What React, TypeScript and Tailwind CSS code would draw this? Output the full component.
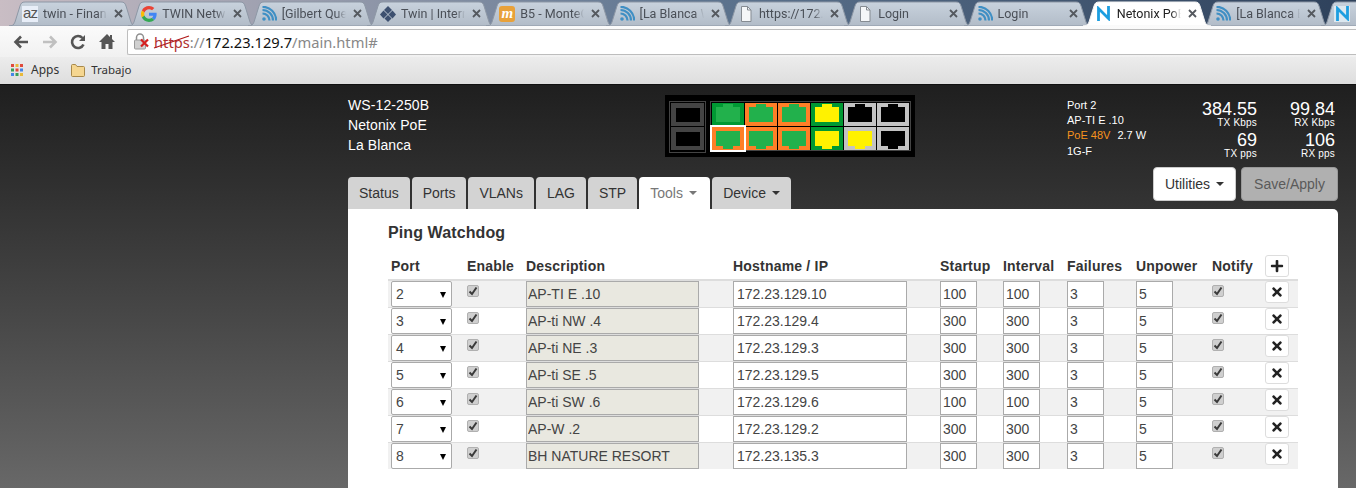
import { FaPlus, FaTimes } from 'react-icons/fa';

const tabs = [
  { title: 'twin - Financ', icon: 'az' },
  { title: 'TWIN Netwo', icon: 'google' },
  { title: '[Gilbert Que', icon: 'rss' },
  { title: 'Twin | Intern', icon: 'twin' },
  { title: 'B5 - MonteC', icon: 'm' },
  { title: '[La Blanca W', icon: 'rss' },
  { title: 'https://172.2', icon: 'file' },
  { title: 'Login', icon: 'file' },
  { title: 'Login', icon: 'rss' },
  { title: 'Netonix PoE', icon: 'n', active: true },
  { title: '[La Blanca E', icon: 'rss' },
  { title: '', icon: 'nbox' },
];

const rows = [
  { port: 2, desc: 'AP-TI E .10', host: '172.23.129.10', startup: 100, interval: 100 },
  { port: 3, desc: 'AP-ti NW .4', host: '172.23.129.4', startup: 300, interval: 300 },
  { port: 4, desc: 'AP-ti NE .3', host: '172.23.129.3', startup: 300, interval: 300 },
  { port: 5, desc: 'AP-ti SE .5', host: '172.23.129.5', startup: 300, interval: 300 },
  { port: 6, desc: 'AP-ti SW .6', host: '172.23.129.6', startup: 100, interval: 100 },
  { port: 7, desc: 'AP-W .2', host: '172.23.129.2', startup: 300, interval: 300 },
  { port: 8, desc: 'BH NATURE RESORT', host: '172.23.135.3', startup: 300, interval: 300 },
];

function Favicon({ icon }: { icon: string }) {
  if (icon === 'az') {
    return (
      <span className="w-4 h-4 bg-[#e8eef8] text-[#555] text-[15px] leading-[14px] tracking-[-1px] text-center shrink-0 font-['Liberation_Sans',sans-serif]">az</span>
    );
  }
  if (icon === 'google') {
    return (
      <svg width="16" height="16" viewBox="0 0 48 48" className="shrink-0">
        <path fill="#EA4335" d="M24 9.5c3.5 0 6.700 1.300 9.100 3.500l6.800-6.800C35.800 2.400 30.300 0 24 0 14.600 0 6.500 5.400 2.600 13.200l7.900 6.100C12.400 13.700 17.700 9.500 24 9.500z" />
        <path fill="#4285F4" d="M46.900 24.500c0-1.600-.1-3.100-.4-4.500H24v9h12.900c-.6 3-2.200 5.500-4.800 7.200l7.700 6c4.500-4.200 7.100-10.300 7.100-17.700z" />
        <path fill="#FBBC05" d="M10.500 28.700A14.500 14.500 0 0 1 10.500 19.300l-7.900-6.100A24 24 0 0 0 2.600 34.800z" />
        <path fill="#34A853" d="M24 48c6.500 0 11.900-2.100 15.900-5.800l-7.700-6c-2.100 1.400-4.900 2.300-8.200 2.300-6.300 0-11.600-4.200-13.500-9.800l-7.900 6.100C6.500 42.600 14.600 48 24 48z" />
      </svg>
    );
  }
  if (icon === 'rss') {
    return (
      <svg width="16" height="16" viewBox="0 0 16 16" className="shrink-0" fill="none" stroke="#3f8fc4" strokeWidth="2.200">
        <circle cx="3" cy="13" r="1.800" fill="#3f8fc4" stroke="none" />
        <path d="M1.500 7.500a7 7 0 0 1 7 7" />
        <path d="M1.500 4a10.500 10.500 0 0 1 10.500 10.500" />
        <path d="M1.500 .8a13.700 13.700 0 0 1 13.700 13.700" />
      </svg>
    );
  }
  if (icon === 'twin') {
    return (
      <svg width="16" height="16" viewBox="0 0 16 16" className="shrink-0" fill="#3d5070">
        <path d="M8 0l4 4-4 4-4-4z" />
        <path d="M3.500 4.500l4 4-4 4-3.500-4z" />
        <path d="M12.500 4.500l3.500 4-3.500 4-4-4z" />
        <path d="M8 9l3.500 3.500L8 16l-3.500-3.500z" />
      </svg>
    );
  }
  if (icon === 'm') {
    return (
      <span className="w-4 h-4 rounded-[3px] bg-[#e8a13a] text-white text-[15px] leading-[15px] italic font-bold text-center shrink-0 font-['Liberation_Serif',serif]">m</span>
    );
  }
  if (icon === 'file') {
    return (
      <svg width="16" height="16" viewBox="0 0 16 16" className="shrink-0" fill="#f4f6f8" stroke="#858b92">
        <path d="M3.500 .5h6l3.500 3.500v11.500h-9.500z" />
        <path d="M9.500 .5v3.500h3.500" fill="none" />
      </svg>
    );
  }
  if (icon === 'n' || icon === 'nbox') {
    return (
      <span className={`w-4 h-4 flex justify-center items-center shrink-0 ${icon === 'nbox' ? 'bg-[#dce8f0]' : ''}`}>
        <svg width="13" height="15" viewBox="0 0 13 15" fill="none" stroke="#1c9ee0" strokeWidth="2.800">
          <path d="M1.500 15V2.500l10 10V0" />
        </svg>
      </span>
    );
  }
  return null;
}

function ChromeTab({ title, icon, active }: { title: string; icon: string; active?: boolean }) {
  return (
    <div className={`relative w-[128px] h-[25px] -mr-[8.7px] shrink-0 flex items-center pl-[13px] pr-[14px] ${active ? 'z-10' : ''}`}>
      <svg width="128" height="25" viewBox="0 0 128 25" className="absolute inset-0">
        <defs>
          <linearGradient id="tabFill" x1="0" y1="0" x2="0" y2="1">
            <stop offset="0" stopColor="#c8d2dd" />
            <stop offset="1" stopColor="#b2bcc8" />
          </linearGradient>
        </defs>
        <path
          d="M0 25c3 0 5-1 6-4L11 5c1-3 2-4 5-4h96c3 0 4 1 5 4l5 16c1 3 3 4 6 4z"
          fill={active ? '#ffffff' : 'url(#tabFill)'}
          stroke={active ? '#f4f4f4' : '#8d97a5'}
          strokeWidth="1"
        />
      </svg>
      <div className="relative flex items-center w-full">
        <Favicon icon={icon} />
        <span
          className={`ml-[5px] w-[64px] overflow-hidden whitespace-nowrap text-[12.500px] leading-4 [mask-image:linear-gradient(to_right,black_85%,transparent)] ${active ? 'text-[#222]' : 'text-[#4a4f57]'}`}
        >
          {title}
        </span>
        {icon !== 'nbox' && (
          <svg width="9" height="9" viewBox="0 0 9 9" className="ml-auto" stroke="#55595f" strokeWidth="1.800">
            <path d="M1 1l7 7M8 1l-7 7" />
          </svg>
        )}
      </div>
    </div>
  );
}

function Toolbar() {
  return (
    <div className="h-[31px] bg-gradient-to-b from-[#fbfbfb] to-[#f1f1f1] flex items-center relative z-20">
      <div className="w-[127px] flex items-center shrink-0">
        <svg width="16" height="14" viewBox="0 0 16 14" className="ml-[13px]" fill="none" stroke="#555" strokeWidth="2.600">
          <path d="M15 7H3M8 1.500L2.500 7 8 12.500" />
        </svg>
        <svg width="16" height="14" viewBox="0 0 16 14" className="ml-[13px]" fill="none" stroke="#c0c0c0" strokeWidth="2.600">
          <path d="M1 7h12M8 1.500L13.500 7 8 12.500" />
        </svg>
        <svg width="16" height="16" viewBox="0 0 16 16" className="ml-[12px]" fill="none" stroke="#555" strokeWidth="2.600">
          <path d="M13.500 10.500A6 6 0 1 1 12.500 4" />
          <path d="M15 1v6H9z" fill="#555" stroke="none" />
        </svg>
        <svg width="16" height="15" viewBox="0 0 16 15" className="ml-[13px]" fill="#555">
          <path d="M8 0L0 8h2.500v7h4v-5h3v5h4V8H16l-3-3V1h-2v2z" />
        </svg>
      </div>
      <div className="flex-1 h-[26px] bg-white border border-[#bdbdbd] border-r-0 rounded-l-[2px] flex items-center text-[14.700px] font-['Noto_Sans',sans-serif] relative">
        <svg width="20" height="18" viewBox="0 0 20 18" className="ml-[5px] shrink-0">
          <path d="M3.500 7V4.500a3.500 3.500 0 0 1 7 0V7" fill="none" stroke="#8f8f8f" strokeWidth="1.500" />
          <rect x="1.500" y="7" width="11" height="9" rx="1" fill="#d0d0d0" stroke="#9a9a9a" />
          <path d="M8 6.500l7 7M15 6.500l-7 7" stroke="#d42020" strokeWidth="2.200" />
        </svg>
        <span className="relative ml-px text-[#b03030] leading-5">
          https
          <svg width="38" height="14" viewBox="0 0 38 14" className="absolute -left-px top-[3px]" stroke="#b01818" strokeWidth="1.300">
            <path d="M1 13L36 1" />
          </svg>
        </span>
        <span className="text-[#888] leading-5">://</span>
        <span className="text-[#111] leading-5">172.23.129.7</span>
        <span className="text-[#888] leading-5">/main.html#</span>
      </div>
    </div>
  );
}

function BookmarksBar() {
  return (
    <div className="h-[27px] bg-gradient-to-b from-[#ececec] to-[#dedede] flex items-center text-[12px] text-[#333] font-['Noto_Sans',sans-serif] pl-[10px] pb-[1px]">
      <svg width="14" height="14" viewBox="0 0 14 14">
        <rect x="1" y="1" width="3" height="3" fill="#e04a3c" />
        <rect x="5.500" y="1" width="3" height="3" fill="#e8b93a" />
        <rect x="10" y="1" width="3" height="3" fill="#e04a3c" />
        <rect x="1" y="5.500" width="3" height="3" fill="#3a9e58" />
        <rect x="5.500" y="5.500" width="3" height="3" fill="#e04a3c" />
        <rect x="10" y="5.500" width="3" height="3" fill="#4585e8" />
        <rect x="1" y="10" width="3" height="3" fill="#4585e8" />
        <rect x="5.500" y="10" width="3" height="3" fill="#3a9e58" />
        <rect x="10" y="10" width="3" height="3" fill="#e8b93a" />
      </svg>
      <span className="ml-[7px]">Apps</span>
      <svg width="16" height="14" viewBox="0 0 16 14" className="ml-[11px]" fill="#f5d690" stroke="#a8894a">
        <path d="M1.500 12.500v-10c0-.6.400-1 1-1h3l1.500 2h6.500c.6 0 1 .4 1 1v8c0 .6-.4 1-1 1h-11c-.6 0-1-.4-1-1z" />
      </svg>
      <span className="ml-[5px] text-[11.500px]">Trabajo</span>
    </div>
  );
}

// top row jack notch points up, bottom row points down
function SwitchPorts() {
  const cols = [0, 1, 2, 3, 4, 5];
  const top = [
    ['#009933', '#22b14c'],
    ['#ff7f27', '#22b14c'],
    ['#ff7f27', '#22b14c'],
    ['#009933', '#fff200'],
    ['#c3c3c3', '#000000'],
    ['#c3c3c3', '#000000'],
  ];
  const bottom = [
    ['#ff7f27', '#22b14c'],
    ['#ff7f27', '#22b14c'],
    ['#ff7f27', '#22b14c'],
    ['#009933', '#fff200'],
    ['#c3c3c3', '#fff200'],
    ['#c3c3c3', '#000000'],
  ];
  return (
    <svg width="250" height="62" viewBox="0 0 250 62" className="shrink-0 block">
      <rect width="250" height="62" fill="#000" />
      <rect x="4.500" y="6.500" width="36" height="51" fill="none" stroke="#444" />
      <rect x="6" y="8" width="33" height="23" fill="#444" />
      <rect x="11" y="13" width="24" height="14" fill="#000" />
      <rect x="6" y="32" width="33" height="23" fill="#444" />
      <rect x="11" y="37" width="24" height="14" fill="#000" />
      <rect x="45.500" y="6.500" width="200" height="49" fill="none" stroke="#444" />
      {cols.map((i) => {
        const x = 47 + i * 33;
        return (
          <g key={i}>
            <rect x={x} y="8" width="32" height="23" fill={top[i][0]} />
            <rect x={x + 4} y="12" width="24" height="15" fill={top[i][1]} />
            <rect x={x + 11} y="9" width="10" height="3" fill={top[i][1]} />
            <rect x={x} y="32" width="32" height="23" fill={bottom[i][0]} />
            <rect x={x + 4} y="36" width="24" height="15" fill={bottom[i][1]} />
            <rect x={x + 11} y="51" width="10" height="3" fill={bottom[i][1]} />
          </g>
        );
      })}
      <rect x="46" y="31" width="34" height="25" fill="none" stroke="#fff" strokeWidth="2" />
    </svg>
  );
}

function Stat({ value, label }: { value: string; label: string }) {
  return (
    <div className="text-right text-white">
      <div className="text-[18px] leading-[17px]">{value}</div>
      <div className="text-[10px] leading-[10px] tracking-[0.2px]">{label}</div>
    </div>
  );
}

function Caret() {
  return <span className="inline-block ml-[6px] align-middle w-0 h-0 border-x-4 border-x-transparent border-t-4 border-t-current" />;
}

function Check() {
  return (
    <span className="block w-3 h-3 rounded-[2px] bg-[#cfcfcf] border border-[#b0b0b0]">
      <svg width="10" height="10" viewBox="0 0 10 10" fill="none" stroke="#3a3a3a" strokeWidth="2">
        <path d="M1.500 5.500L4 8l4.500-6.500" />
      </svg>
    </span>
  );
}

function NumInput({ value, className }: { value: string | number; className: string }) {
  return (
    <input
      readOnly
      value={value}
      className={`block h-[26px] border border-[#aaa] bg-white px-[3px] text-[14px] text-[#444] outline-none ${className}`}
    />
  );
}

function IconButton({ children }: { children: React.ReactNode }) {
  return (
    <button className="flex items-center justify-center w-[24px] h-[22px] bg-white border border-[#ddd] rounded-[3px] text-[#222] text-[14px]">
      {children}
    </button>
  );
}

function PingTable() {
  const headers = ['Port', 'Enable', 'Description', 'Hostname / IP', 'Startup', 'Interval', 'Failures', 'Unpower', 'Notify'];
  return (
    <table className="table-fixed w-[910px] border-collapse">
      <colgroup>
        <col className="w-[76px]" />
        <col className="w-[59px]" />
        <col className="w-[207px]" />
        <col className="w-[207px]" />
        <col className="w-[63px]" />
        <col className="w-[64px]" />
        <col className="w-[69px]" />
        <col className="w-[76px]" />
        <col className="w-[53px]" />
        <col className="w-[36px]" />
      </colgroup>
      <thead>
        <tr className="border-b-2 border-[#ddd]">
          {headers.map((h) => (
            <th key={h} className="h-[25px] pl-[3px] text-left text-[14px] font-bold text-[#333] align-bottom pb-[2px] whitespace-nowrap tracking-[0.2px]">
              {h}
            </th>
          ))}
          <th className="pl-[3px] align-top">
            <IconButton>
              <FaPlus />
            </IconButton>
          </th>
        </tr>
      </thead>
      <tbody>
        {rows.map((row, i) => (
          <tr key={row.port} className={`${i % 2 === 0 ? 'bg-[#f1f1f1]' : 'bg-white'} ${i > 0 ? 'border-t border-[#ddd]' : ''}`}>
            <td className="pl-[3px] align-top">
              <div className="relative w-[61px] h-[26px] bg-white border border-[#aaa] rounded-[2px] text-[14px] text-[#444] leading-[24px] pl-1">
                {row.port}
                <span className="absolute right-[5px] top-[10px] w-0 h-0 border-x-[3.5px] border-x-transparent border-t-[6px] border-t-black" />
              </div>
            </td>
            <td className="pl-[3px] pt-[4px] align-top">
              <Check />
            </td>
            <td className="pl-[3px] align-top">
              <NumInput value={row.desc} className="w-[173px] bg-[#e9e8e0]! px-[1px]!" />
            </td>
            <td className="pl-[3px] align-top">
              <NumInput value={row.host} className="w-[174px]" />
            </td>
            <td className="pl-[3px] align-top">
              <NumInput value={row.startup} className="w-[37px] px-[2px]!" />
            </td>
            <td className="pl-[3px] align-top">
              <NumInput value={row.interval} className="w-[37px] px-[2px]!" />
            </td>
            <td className="pl-[3px] align-top">
              <NumInput value={3} className="w-[37px] px-[2px]!" />
            </td>
            <td className="pl-[3px] align-top">
              <NumInput value={5} className="w-[37px] px-[2px]!" />
            </td>
            <td className="pl-[3px] pt-[4px] align-top">
              <Check />
            </td>
            <td className="pl-[3px] align-top">
              <IconButton>
                <FaTimes />
              </IconButton>
            </td>
          </tr>
        ))}
      </tbody>
    </table>
  );
}

export default function App() {
  const navTabs = ['Status', 'Ports', 'VLANs', 'LAG', 'STP'];
  return (
    <div className="w-[1356px] h-[488px] overflow-hidden flex flex-col font-['Liberation_Sans',Arial,sans-serif]">
      {/* browser chrome */}
      <div className="h-[26px] pt-px pl-[9px] flex bg-gradient-to-r from-[#c9bdc4] via-[#5f7691] to-[#2e415b] overflow-hidden font-['Roboto',sans-serif]">
        {tabs.map((t, i) => (
          <ChromeTab key={i} title={t.title} icon={t.icon} active={t.active} />
        ))}
      </div>
      <Toolbar />
      <BookmarksBar />
      <div className="h-px bg-[#111]" />

      {/* switch page */}
      <div className="flex-1 min-h-0 bg-gradient-to-b from-[#1f1f1f] to-[#686868] pl-[348px] pr-[18px] pt-[10px]">
        <div className="flex h-[62px]">
          <div className="w-[317px] text-[14px] leading-[20px] text-white tracking-[0.1px]">
            <div>WS-12-250B</div>
            <div>Netonix PoE</div>
            <div>La Blanca</div>
          </div>
          <SwitchPorts />
          <div className="ml-[152px] w-[112px] text-[11px] leading-[15.200px] text-white pt-[3px]">
            <div>Port 2</div>
            <div>AP-TI E .10</div>
            <div>
              <span className="text-[#f7931e]">PoE 48V</span>
              <span className="ml-[7px]">2.7 W</span>
            </div>
            <div>1G-F</div>
          </div>
          <div className="w-[78px] flex flex-col gap-[4px] pt-[6px]">
            <Stat value="384.55" label="TX Kbps" />
            <Stat value="69" label="TX pps" />
          </div>
          <div className="w-[78px] flex flex-col gap-[4px] pt-[6px]">
            <Stat value="99.84" label="RX Kbps" />
            <Stat value="106" label="RX pps" />
          </div>
        </div>

        <div className="flex items-end justify-between h-[42px] mt-[10px]">
          <div className="flex gap-[2px] text-[14px] text-[#333]">
            {navTabs.map((t) => (
              <div key={t} className="h-[32px] px-[11px] flex items-center bg-[#d3d3d3] rounded-t-[4px]">
                {t}
              </div>
            ))}
            <div className="w-[71px] h-[32px] pl-[11px] flex items-center bg-white text-[#777] rounded-t-[4px]">
              Tools
              <Caret />
            </div>
            <div className="w-[79px] h-[32px] pl-[11px] flex items-center bg-[#d3d3d3] rounded-t-[4px]">
              Device
              <Caret />
            </div>
          </div>
          <div className="flex gap-[5px] mb-[8px] text-[14px]">
            <div className="w-[83px] h-[34px] flex items-center justify-center bg-white border border-[#ccc] rounded-[4px] text-[#333]">
              Utilities
              <Caret />
            </div>
            <div className="w-[97px] h-[34px] flex items-center justify-center bg-[#b0b0b0] border border-[#999] rounded-[4px] text-[#5a5a5a]">
              Save/Apply
            </div>
          </div>
        </div>

        <div className="h-[279px] bg-white rounded-tr-[5px] pl-[40px] pt-[15px]">
          <h2 className="text-[16px] leading-[18px] font-bold text-[#333] tracking-[0.1px]">Ping Watchdog</h2>
          <div className="mt-[13px]">
            <PingTable />
          </div>
        </div>
      </div>
    </div>
  );
}
